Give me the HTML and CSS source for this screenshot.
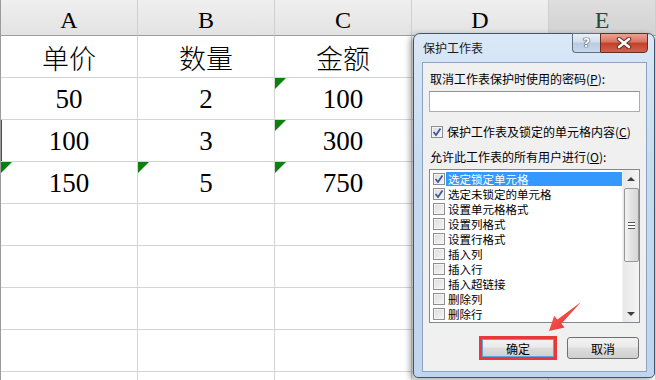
FILE: index.html
```html
<!DOCTYPE html>
<html lang="zh-CN">

<head>
    <meta charset="UTF-8">
    <meta name="viewport" content="width=device-width, initial-scale=1.0">
    <title>保护工作表</title>
    <link rel="stylesheet" href="styles.css">
</head>

<body>
    <div class="screen">
        <div class="sheet">
            <div class="col-head">A</div>
            <div class="col-head">B</div>
            <div class="col-head">C</div>
            <div class="col-head">D</div>
            <div class="col-head active">E</div>

            <div class="cell">单价</div>
            <div class="cell">数量</div>
            <div class="cell">金额</div>
            <div class="cell"></div>
            <div class="cell"></div>

            <div class="cell">50</div>
            <div class="cell">2</div>
            <div class="cell flag">100</div>
            <div class="cell"></div>
            <div class="cell"></div>

            <div class="cell edge">100</div>
            <div class="cell">3</div>
            <div class="cell flag">300</div>
            <div class="cell"></div>
            <div class="cell"></div>

            <div class="cell flag">150</div>
            <div class="cell flag">5</div>
            <div class="cell flag">750</div>
            <div class="cell"></div>
            <div class="cell"></div>

            <div class="cell"></div><div class="cell"></div><div class="cell"></div><div class="cell"></div><div class="cell"></div>
            <div class="cell"></div><div class="cell"></div><div class="cell"></div><div class="cell"></div><div class="cell"></div>
            <div class="cell"></div><div class="cell"></div><div class="cell"></div><div class="cell"></div><div class="cell"></div>
            <div class="cell"></div><div class="cell"></div><div class="cell"></div><div class="cell"></div><div class="cell"></div>
            <div class="cell"></div><div class="cell"></div><div class="cell"></div><div class="cell"></div><div class="cell"></div>
        </div>

        <div class="dialog">
            <div class="title-bar">
                <span class="title">保护工作表</span>
                <div class="caption-btns">
                    <span class="help-btn">?</span>
                    <span class="close-btn">
                        <svg width="16" height="12" viewBox="0 0 16 12">
                            <path d="M3 2 L13 10 M13 2 L3 10" stroke="#5a2a22" stroke-width="4.4" stroke-linecap="round"/>
                            <path d="M3 2 L13 10 M13 2 L3 10" stroke="#fff" stroke-width="2.6" stroke-linecap="round"/>
                        </svg>
                    </span>
                </div>
            </div>

            <div class="panel">
                <div class="label">取消工作表保护时使用的密码(<u>P</u>):</div>
                <div class="input"></div>

                <div class="check-row">
                    <span class="box checked">
                        <svg width="10" height="10" viewBox="0 0 10 10"><path d="M1.5 5 L4 8 L8.5 1.5" fill="none" stroke="#3d5a9a" stroke-width="1.8"/></svg>
                    </span>
                    <span>保护工作表及锁定的单元格内容(<u>C</u>)</span>
                </div>

                <div class="label allow">允许此工作表的所有用户进行(<u>O</u>):</div>

                <div class="listbox">
                    <ul class="items">
                        <li class="selected"><span class="box checked"><svg width="10" height="10" viewBox="0 0 10 10"><path d="M1.5 5 L4 8 L8.5 1.5" fill="none" stroke="#3d5a9a" stroke-width="1.8"/></svg></span><span class="text">选定锁定单元格</span></li>
                        <li><span class="box checked"><svg width="10" height="10" viewBox="0 0 10 10"><path d="M1.5 5 L4 8 L8.5 1.5" fill="none" stroke="#3d5a9a" stroke-width="1.8"/></svg></span><span class="text">选定未锁定的单元格</span></li>
                        <li><span class="box"></span><span class="text">设置单元格格式</span></li>
                        <li><span class="box"></span><span class="text">设置列格式</span></li>
                        <li><span class="box"></span><span class="text">设置行格式</span></li>
                        <li><span class="box"></span><span class="text">插入列</span></li>
                        <li><span class="box"></span><span class="text">插入行</span></li>
                        <li><span class="box"></span><span class="text">插入超链接</span></li>
                        <li><span class="box"></span><span class="text">删除列</span></li>
                        <li><span class="box"></span><span class="text">删除行</span></li>
                    </ul>
                    <div class="scrollbar">
                        <span class="arrow-up"></span>
                        <div class="thumb"><span class="grip"></span></div>
                        <span class="arrow-down"></span>
                    </div>
                </div>

                <div class="buttons">
                    <button class="btn ok">确定</button>
                    <button class="btn">取消</button>
                </div>
            </div>
        </div>

        <!-- red pointer drawn on top of the screenshot -->
        <svg class="pointer" width="656" height="380" viewBox="0 0 656 380">
            <defs>
                <linearGradient id="red" x1="0" y1="0" x2="1" y2="1">
                    <stop offset="0" stop-color="#ff6a6a"/>
                    <stop offset="1" stop-color="#e2231f"/>
                </linearGradient>
            </defs>
            <polygon points="581,302 561.4,323.8 564.6,327.4 549,331 554.2,315.8 557.4,319.4" fill="url(#red)"/>
        </svg>
    </div>
</body>

</html>
```

FILE: styles.css
```css
* {
    margin: 0;
    padding: 0;
    box-sizing: border-box;
}

body {
    background-color: #fff;
    overflow: hidden;
}

.screen {
    position: relative;
    width: 656px;
    height: 380px;
    overflow: hidden;
}

/* spreadsheet */

.sheet {
    display: grid;
    grid-template-columns: 137px 137px 137px 137px 1fr;
    grid-template-rows: 36px repeat(9, 42px);
    border-left: 1px solid #9b9b9b;
    width: 656px;
    font-family: "Liberation Serif", "Noto Sans CJK SC", serif;
    color: #000;
}

.col-head {
    display: flex;
    justify-content: center;
    align-items: center;
    padding-top: 5px;
    font-size: 24px;
    background: linear-gradient(#efefef, #e3e3e3);
    border-right: 1px solid #cfcfcf;
    border-bottom: 1px solid #9e9e9e;
}

.col-head.active {
    background: linear-gradient(#dedede, #d2d2d2);
    color: #1e4f3c;
}

.cell {
    position: relative;
    display: flex;
    justify-content: center;
    align-items: center;
    padding-top: 2px;
    font-size: 27px;
    font-weight: 300;
    border-right: 1px solid #d4d4d4;
    border-bottom: 1px solid #d4d4d4;
}

.cell.flag::before {
    content: "";
    position: absolute;
    top: 0;
    left: 0;
    border-top: 11px solid #0b800b;
    border-right: 11px solid transparent;
}

.cell.edge {
    box-shadow: inset 1px 0 #1f6b2d;
}

/* dialog */

.dialog {
    position: absolute;
    left: 413px;
    top: 33px;
    width: 242px;
    height: 345px;
    display: flex;
    flex-direction: column;
    background: linear-gradient(#dae8f7, #c6daf0 40%, #c0d5ee);
    border: 1px solid #45536a;
    border-radius: 7px 7px 5px 5px;
    box-shadow: -3px 2px 6px rgba(0, 0, 0, 0.35);
    font-family: "Noto Sans CJK SC", "Microsoft YaHei", sans-serif;
    font-size: 12px;
    color: #000;
}

.title-bar {
    position: relative;
    height: 28px;
    padding: 6px 0 0 9px;
    line-height: 16px;
    color: #1b1b1b;
}

.caption-btns {
    position: absolute;
    top: -1px;
    right: 6px;
    display: flex;
}

.help-btn {
    width: 28px;
    height: 20px;
    display: flex;
    justify-content: center;
    align-items: center;
    background: linear-gradient(#e9eff7, #d3dfed 45%, #b9cbe1 50%, #c8d8ea);
    border: 1px solid #5f6f86;
    border-right: none;
    border-radius: 0 0 0 4px;
    font-family: "DejaVu Sans", sans-serif;
    font-weight: bold;
    font-size: 13px;
    color: #fff;
    text-shadow: 0 0 1px #2d3c52, 0 0 1px #2d3c52, 0 0 1px #2d3c52;
}

.close-btn {
    width: 48px;
    height: 20px;
    display: flex;
    justify-content: center;
    align-items: center;
    background: linear-gradient(#e8a496, #d8735f 45%, #c2402a 50%, #d3624b);
    border: 1px solid #6a2b22;
    border-radius: 0 0 4px 0;
}

.panel {
    flex: 1;
    margin: 0 7px 5px 8px;
    padding: 8px 6px 0 6px;
    background-color: #f0f0f0;
    border: 1px solid #8da2bd;
    line-height: 16px;
}

.label {
    padding-left: 1px;
}

.input {
    margin-top: 4px;
    height: 21px;
    background-color: #fff;
    border: 1px solid #abadb3;
    border-top-color: #8e9196;
}

.check-row {
    display: flex;
    align-items: center;
    gap: 4px;
    margin-top: 12px;
    padding-left: 2px;
}

.box {
    width: 12px;
    height: 12px;
    flex: none;
    display: flex;
    justify-content: center;
    align-items: center;
    border: 1px solid #8e8f8f;
    background: linear-gradient(135deg, #dcdcdc, #f6f6f6);
    box-shadow: inset 0 0 0 1px #f4f4f4;
}

.label.allow {
    margin-top: 9px;
}

.listbox {
    display: flex;
    margin-top: 4px;
    height: 154px;
    background-color: #fff;
    border: 1px solid #828790;
}

.items {
    flex: 1;
    list-style: none;
    padding-top: 1px;
}

.items li {
    display: flex;
    align-items: center;
    height: 15px;
    padding-left: 3px;
}

.items .text {
    flex: 1;
    height: 14px;
    overflow: hidden;
    font-size: 11.5px;
    line-height: 14px;
    margin-left: 1px;
    padding-left: 2px;
}

.items li.selected .text {
    background-color: #3399ff;
    color: #fff;
}

.scrollbar {
    width: 17px;
    display: flex;
    flex-direction: column;
    align-items: center;
    background: linear-gradient(90deg, #e8e8e8, #f4f4f4);
    border-left: 1px solid #f0f0f0;
}

.arrow-up,
.arrow-down {
    width: 0;
    height: 0;
    border-left: 4px solid transparent;
    border-right: 4px solid transparent;
}

.arrow-up {
    margin-top: 7px;
    border-bottom: 4px solid #3d3d3d;
}

.arrow-down {
    margin-top: auto;
    margin-bottom: 6px;
    border-top: 4px solid #3d3d3d;
}

.thumb {
    width: 15px;
    height: 74px;
    margin-top: 7px;
    display: flex;
    justify-content: center;
    align-items: center;
    background: linear-gradient(90deg, #f3f3f3, #e2e2e2 50%, #d6d6d6);
    border: 1px solid #979797;
    border-radius: 2px;
}

.grip {
    width: 7px;
    height: 7px;
    border-top: 1px solid #555;
    border-bottom: 1px solid #555;
    background: linear-gradient(#fff 2px, #555 2px, #555 3px, #fff 3px);
}

.buttons {
    display: flex;
    justify-content: flex-end;
    align-items: center;
    gap: 10px;
    margin-top: 13px;
    padding-right: 1px;
}

.btn {
    width: 72px;
    height: 22px;
    font-family: "Noto Sans CJK SC", "Microsoft YaHei", sans-serif;
    font-size: 12px;
    color: #000;
    background: linear-gradient(#f2f2f2, #ebebeb 45%, #dddddd 50%, #cfcfcf);
    border: 1px solid #707070;
    border-radius: 3px;
}

.btn.ok {
    width: 78px;
    height: 24px;
    border: 3px solid #e8383a;
    border-radius: 0;
    box-shadow: inset 0 0 0 1px #5ea6dc;
}

.pointer {
    position: absolute;
    top: 0;
    left: 0;
    pointer-events: none;
}
```
